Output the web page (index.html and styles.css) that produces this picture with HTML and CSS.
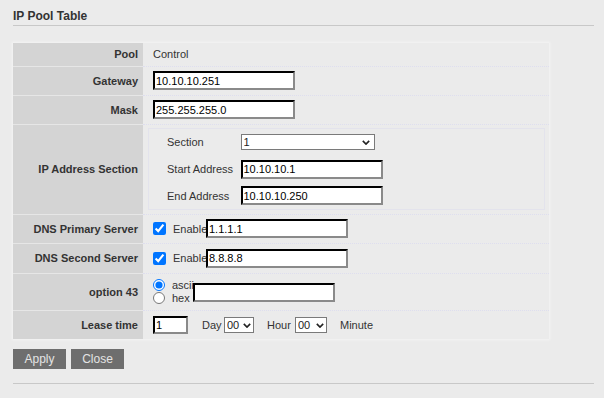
FILE: index.html
```html
<!DOCTYPE html>
<html lang="en">
<head>
    <meta charset="UTF-8">
    <title>IP Pool Table</title>
    <link rel="stylesheet" href="styles.css">
</head>
<body>
    <div class="page">
        <div class="title">IP Pool Table</div>

        <div class="panel">
            <table class="pool">
                <tr class="r-pool">
                    <td class="lbl">Pool</td>
                    <td class="val">Control</td>
                </tr>
                <tr class="r-std">
                    <td class="lbl">Gateway</td>
                    <td class="val"><input type="text" class="ip" value="10.10.10.251"></td>
                </tr>
                <tr class="r-std">
                    <td class="lbl">Mask</td>
                    <td class="val"><input type="text" class="ip" value="255.255.255.0"></td>
                </tr>
                <tr class="r-sect">
                    <td class="lbl">IP Address Section</td>
                    <td class="val sect">
                        <table class="inner">
                            <tr>
                                <td class="ilbl">Section</td>
                                <td>
                                    <span class="dd sel-sect">
                                        <select><option>1</option><option>2</option></select>
                                        <svg class="chev" viewBox="0 0 10 6"><path d="M1 1 L5 5 L9 1" /></svg>
                                    </span>
                                </td>
                            </tr>
                            <tr>
                                <td class="ilbl">Start Address</td>
                                <td><input type="text" class="ip" value="10.10.10.1"></td>
                            </tr>
                            <tr>
                                <td class="ilbl">End Address</td>
                                <td><input type="text" class="ip" value="10.10.10.250"></td>
                            </tr>
                        </table>
                    </td>
                </tr>
                <tr class="r-std">
                    <td class="lbl">DNS Primary Server</td>
                    <td class="val"><div class="line"><input type="checkbox" checked><span class="en">Enable</span><input type="text" class="ip" value="1.1.1.1"></div></td>
                </tr>
                <tr class="r-dns2">
                    <td class="lbl">DNS Second Server</td>
                    <td class="val"><div class="line"><input type="checkbox" checked><span class="en">Enable</span><input type="text" class="ip" value="8.8.8.8"></div></td>
                </tr>
                <tr class="r-opt">
                    <td class="lbl">option 43</td>
                    <td class="val">
                        <div class="line">
                            <div class="radios">
                                <label><input type="radio" name="fmt" checked>ascii</label>
                                <label><input type="radio" name="fmt">hex</label>
                            </div>
                            <input type="text" class="ip opt">
                        </div>
                    </td>
                </tr>
                <tr class="r-std last">
                    <td class="lbl">Lease time</td>
                    <td class="val">
                        <div class="line">
                            <input type="text" class="days" value="1">
                            <span class="unit u-day">Day</span>
                            <span class="dd small">
                                <select><option>00</option></select>
                                <svg class="chev" viewBox="0 0 10 6"><path d="M1 1 L5 5 L9 1" /></svg>
                            </span>
                            <span class="unit u-hour">Hour</span>
                            <span class="dd small wide">
                                <select><option>00</option></select>
                                <svg class="chev" viewBox="0 0 10 6"><path d="M1 1 L5 5 L9 1" /></svg>
                            </span>
                            <span class="unit u-min">Minute</span>
                        </div>
                    </td>
                </tr>
            </table>
        </div>

        <div class="buttons">
            <button class="btn">Apply</button>
            <button class="btn">Close</button>
        </div>

        <div class="rule"></div>
    </div>
</body>
</html>
```

FILE: styles.css
```css
* {
    box-sizing: border-box;
}

body {
    margin: 0;
    background: #ebebeb;
    font-family: "Liberation Sans", Arial, sans-serif;
    font-size: 11px;
    color: #333;
}

.page {
    padding: 9px 10px 0 13px;
}

.title {
    font-weight: bold;
    font-size: 12px;
    line-height: 14px;
    padding-bottom: 2px;
    border-bottom: 1px solid #c8c8c8;
}

.panel {
    margin-top: 17px;
    width: 536px;
    box-shadow: 0 0 2px 1px #f4f4f4;
}

.pool {
    width: 100%;
    border-collapse: collapse;
    border-spacing: 0;
}

.pool > tbody > tr > td {
    padding: 0;
    vertical-align: middle;
}

.lbl {
    width: 130px;
    background: #d4d4d4;
    text-align: right;
    font-weight: bold;
    padding-right: 5px !important;
    border-bottom: 1px solid #e6e6e6;
}

.val {
    padding-left: 10px !important;
    border-bottom: 1px dotted #dedeef;
}

.last td {
    border-bottom: none;
}

.r-pool { height: 23px; }
.r-std { height: 29px; }
.r-sect { height: 90px; }
.r-dns2 { height: 30px; }
.r-opt { height: 37px; }

input.ip {
    width: 142px;
    height: 19px;
    border: 2px inset #8a8a8a;
    border-top-color: #222;
    border-left-color: #222;
    background: #fff;
    font-family: "Liberation Sans", Arial, sans-serif;
    font-size: 11px;
    padding: 0 1px;
    margin: 0;
    vertical-align: middle;
}

.val.sect {
    padding: 3px 4px 3px 5px !important;
}

.inner {
    width: 100%;
    border-collapse: collapse;
    border: 1px solid #e3e3ec;
}

.inner td {
    padding: 0;
    height: 27px;
    vertical-align: middle;
}

.ilbl {
    width: 92px;
    padding-left: 18px !important;
}

/* select with drawn chevron */
.dd {
    position: relative;
    display: inline-block;
    height: 16px;
    vertical-align: middle;
}

.dd select {
    appearance: none;
    -webkit-appearance: none;
    width: 100%;
    height: 16px;
    font-family: "Liberation Sans", Arial, sans-serif;
    font-size: 11px;
    line-height: 14px;
    padding: 0 0 0 2px;
    margin: 0;
    border: 1px solid #7a7a7a;
    border-radius: 0;
    background: #fff;
    color: #222;
    display: block;
}

.chev {
    position: absolute;
    right: 4px;
    top: 6px;
    width: 8px;
    height: 5px;
    pointer-events: none;
}

.chev path {
    fill: none;
    stroke: #222;
    stroke-width: 2;
}

.sel-sect {
    width: 134px;
}

.sel-sect .chev {
    right: 5px;
}

.line {
    display: flex;
    align-items: center;
}

input[type="checkbox"] {
    width: 13px;
    height: 13px;
    margin: 0 7px 0 0;
}

.en {
    width: 33px;
    white-space: nowrap;
}

.radios {
    width: 40px;
    display: flex;
    flex-direction: column;
    white-space: nowrap;
}

.radios label {
    display: flex;
    align-items: center;
    line-height: 13px;
    height: 13px;
}

input[type="radio"] {
    width: 12px;
    height: 12px;
    margin: 0 7px 0 0;
}

input.opt {
    position: relative;
    margin-top: 1px;
}

input.days {
    width: 35px;
    height: 18px;
    border: 2px inset #8a8a8a;
    border-top-color: #222;
    border-left-color: #222;
    font-family: "Liberation Sans", Arial, sans-serif;
    font-size: 11px;
    padding: 0 1px;
    margin: 0;
}

.unit {
    white-space: nowrap;
}

.u-day { margin-left: 14px; width: 22px; }
.u-hour { margin-left: 13px; width: 28px; }
.u-min { margin-left: 13px; }

.small {
    width: 30px;
}

.small.wide {
    width: 32px;
}

.small .chev {
    right: 3px;
}

.buttons {
    margin-top: 10px;
    display: flex;
    gap: 5px;
}

.btn {
    width: 53px;
    height: 20px;
    border: none;
    background: #6e6e6e;
    color: #e4e4e4;
    font-family: "Liberation Sans", Arial, sans-serif;
    font-size: 12px;
    padding: 0;
}

.rule {
    margin-top: 14px;
    border-top: 1px solid #c8c8c8;
}
```
